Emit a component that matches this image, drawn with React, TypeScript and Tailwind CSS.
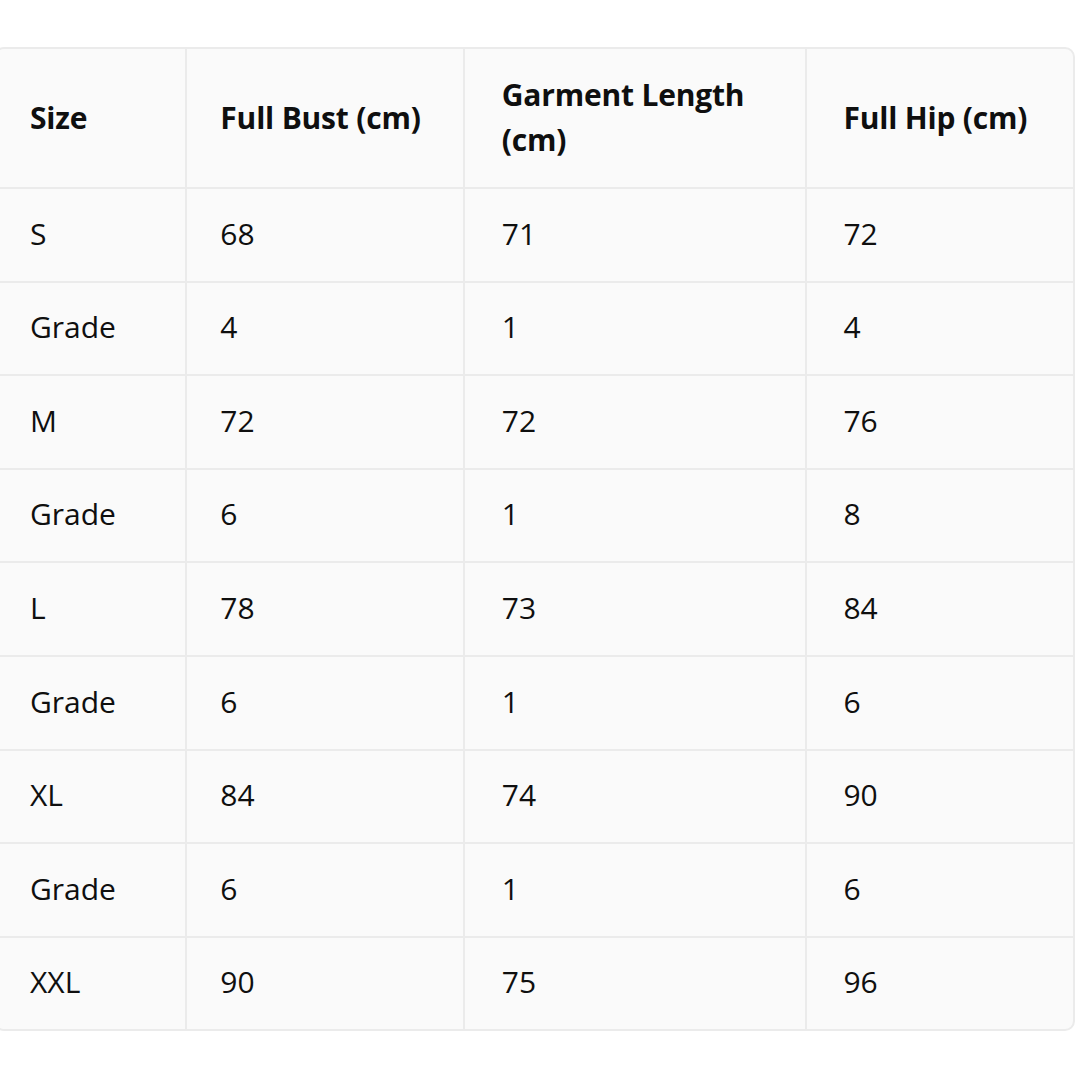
import React from 'react';

const headers = ['Size', 'Full Bust (cm)', 'Garment Length (cm)', 'Full Hip (cm)'];

const rows: string[][] = [
  ['S', '68', '71', '72'],
  ['Grade', '4', '1', '4'],
  ['M', '72', '72', '76'],
  ['Grade', '6', '1', '8'],
  ['L', '78', '73', '84'],
  ['Grade', '6', '1', '6'],
  ['XL', '84', '74', '90'],
  ['Grade', '6', '1', '6'],
  ['XXL', '90', '75', '96'],
];

const colWidths = ['w-[190px]', 'w-[277px]', 'w-[342px]', 'w-[266px]'];
const padLeft = ['pl-[34px]', 'pl-[33px]', 'pl-[37px]', 'pl-[36px]'];

export default function App() {
  return (
    <div
      className="w-[1080px] h-[1080px] bg-white overflow-hidden pt-[47px]"
      style={{ fontFamily: '"Open Sans", "Noto Sans", sans-serif' }}
    >
      <div className="-ml-[6px] w-[1081px] border-2 border-[#ebebeb] rounded-[10px] overflow-hidden bg-[#fafafa] text-[#0f0f0f] text-[30px]">
        <table className="w-full border-collapse table-fixed">
          <colgroup>
            {colWidths.map((w, i) => (
              <col key={i} className={w} />
            ))}
          </colgroup>
          <thead>
            <tr className="border-b-2 border-[#ebebeb]">
              {headers.map((h, i) => (
                <th
                  key={h}
                  className={`text-left font-bold tracking-[-0.2px] leading-[45px] pt-[23px] pb-[25px] pr-2 ${padLeft[i]} ${i < 3 ? 'border-r-2 border-[#ebebeb]' : ''}`}
                >
                  {h === 'Garment Length (cm)' ? (
                    <>
                      Garment Length
                      <br />
                      (cm)
                    </>
                  ) : (
                    h
                  )}
                </th>
              ))}
            </tr>
          </thead>
          <tbody>
            {rows.map((r, ri) => (
              <tr key={ri} className={ri < rows.length - 1 ? 'border-b-2 border-[#ebebeb]' : ''}>
                {r.map((c, ci) => (
                  <td
                    key={ci}
                    className={`leading-[45px] pt-[21.6px] pb-[25px] ${padLeft[ci]} ${ci < 3 ? 'border-r-2 border-[#ebebeb]' : ''}`}
                  >
                    {c}
                  </td>
                ))}
              </tr>
            ))}
          </tbody>
        </table>
      </div>
    </div>
  );
}
